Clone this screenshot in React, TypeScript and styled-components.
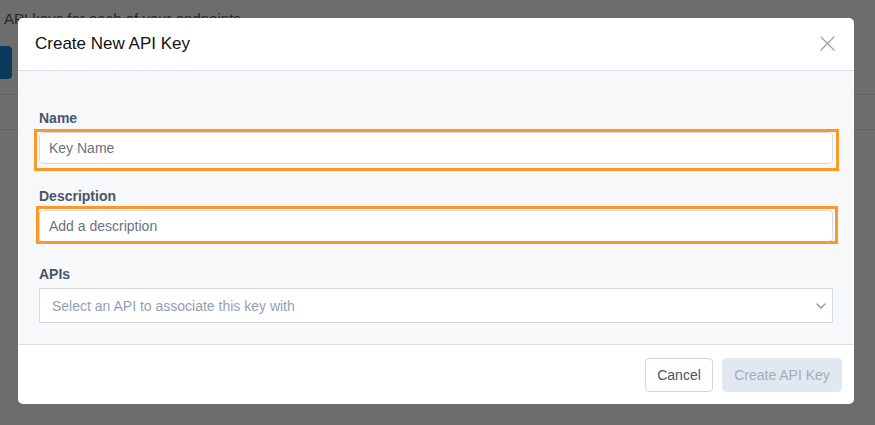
import React from "react";
import styled, { createGlobalStyle } from "styled-components";

const Global = createGlobalStyle`
  html, body { margin: 0; padding: 0; }
  body {
    width: 875px;
    height: 425px;
    overflow: hidden;
    background: #fbfbfd;
    font-family: "Liberation Sans", Arial, sans-serif;
  }
  * { box-sizing: border-box; }
`;

const Page = styled.div`
  position: relative;
  width: 875px;
  height: 425px;
  overflow: hidden;
`;

const PageHeader = styled.div`
  height: 95px;
  padding: 9px 0 0 4px;
  border-bottom: 1px solid #e6e6ea;
  display: flex;
  flex-direction: column;
  gap: 17px;
`;

const PageIntro = styled.p`
  margin: 0;
  font-size: 15px;
  line-height: 20px;
  color: #5a5a60;
`;

const PrimaryButton = styled.div`
  width: 120px;
  height: 33px;
  margin-left: -112px;
  background: #1a85d6;
  border-radius: 4px;
`;

const TabBar = styled.div`
  height: 35px;
  border-bottom: 1px solid #e6e6ea;
`;

const Overlay = styled.div`
  position: absolute;
  inset: 0;
  background: rgba(0, 0, 0, 0.565);
  padding: 18px 21px 21px 18px;
  display: flex;
  align-items: flex-start;
`;

const Modal = styled.div`
  width: 836px;
  height: 386px;
  background: #ffffff;
  border-radius: 5px;
  display: flex;
  flex-direction: column;
  overflow: hidden;
`;

const ModalHeader = styled.div`
  height: 53px;
  flex: none;
  display: flex;
  align-items: center;
  justify-content: space-between;
  padding: 0 19px 1px 17px;
  border-bottom: 1px solid #d9dee7;
`;

const Title = styled.h2`
  margin: 0;
  font-family: "Liberation Sans", Arial, sans-serif;
  font-weight: 400;
  font-size: 17px;
  line-height: 22px;
  color: #111111;
`;

const CloseButton = styled.button`
  border: 0;
  padding: 0;
  background: transparent;
  width: 16px;
  height: 16px;
  display: flex;
  align-items: center;
  justify-content: center;
  cursor: pointer;
`;

const ModalBody = styled.div`
  flex: 1;
  background: #f7f8fa;
  padding: 37px 21px 0 21px;
  display: flex;
  flex-direction: column;
  gap: 22px;
`;

const Field = styled.div`
  display: flex;
  flex-direction: column;
  gap: 4px;
`;

const Label = styled.label`
  font-size: 14px;
  line-height: 20px;
  font-weight: 700;
  color: #4a5568;
`;

const Highlight = styled.div<{ $t: number; $l: number; $r: number; $b: number }>`
  position: relative;
  &::after {
    content: "";
    position: absolute;
    top: ${(p) => -p.$t}px;
    left: ${(p) => -p.$l}px;
    right: ${(p) => -p.$r}px;
    bottom: ${(p) => -p.$b}px;
    border: 3px solid #fb9826;
    pointer-events: none;
  }
`;

const TextInput = styled.input`
  display: block;
  width: 100%;
  height: 32px;
  padding: 0 9px;
  border: 1px solid #d5dbe4;
  border-radius: 4px;
  background: #ffffff;
  font-family: "Liberation Sans", Arial, sans-serif;
  font-size: 14px;
  color: #2d3748;
  outline: none;
  &::placeholder {
    color: #6b7280;
  }
`;

const SelectBox = styled.div`
  position: relative;
  height: 35px;
  border: 1px solid #d5dbe4;
  background: #ffffff;
  display: flex;
  align-items: center;
  justify-content: space-between;
  padding: 0 6px 0 12px;
  font-size: 14px;
  color: #94a0b2;
`;

const ModalFooter = styled.div`
  height: 60px;
  flex: none;
  border-top: 1px solid #d9dee7;
  display: flex;
  align-items: center;
  justify-content: flex-end;
  gap: 9px;
  padding: 0 12px 0 0;
`;

const Button = styled.button<{ $variant?: "secondary" | "disabled"; $w: number }>`
  width: ${(p) => p.$w}px;
  height: 34px;
  padding: 0;
  border-radius: 4px;
  font-family: "Liberation Sans", Arial, sans-serif;
  font-size: 14px;
  border: 1px solid ${(p) => (p.$variant === "disabled" ? "#e2e8f0" : "#ced5df")};
  background: ${(p) => (p.$variant === "disabled" ? "#e2e8f0" : "#ffffff")};
  color: ${(p) => (p.$variant === "disabled" ? "#a0aec0" : "#4a5568")};
  cursor: ${(p) => (p.$variant === "disabled" ? "default" : "pointer")};
`;

export default function App() {
  return (
    <Page>
      <Global />
      <PageHeader>
        <PageIntro>API keys for each of your endpoints</PageIntro>
        <PrimaryButton />
      </PageHeader>
      <TabBar />
      <Overlay>
        <Modal>
          <ModalHeader>
            <Title>Create New API Key</Title>
            <CloseButton aria-label="Close">
              <svg width="15" height="15" viewBox="0 0 15 15" fill="none">
                <path d="M1 1L14 14M14 1L1 14" stroke="#9aa5b6" strokeWidth="1.4" strokeLinecap="round" />
              </svg>
            </CloseButton>
          </ModalHeader>
          <ModalBody>
            <Field>
              <Label>Name</Label>
              <Highlight $t={3} $l={5} $r={6} $b={7}>
                <TextInput placeholder="Key Name" />
              </Highlight>
            </Field>
            <Field>
              <Label>Description</Label>
              <Highlight $t={4} $l={3} $r={5} $b={2}>
                <TextInput placeholder="Add a description" />
              </Highlight>
            </Field>
            <Field>
              <Label>APIs</Label>
              <SelectBox>
                <span>Select an API to associate this key with</span>
                <svg width="10" height="6" viewBox="0 0 10 6" fill="none">
                  <path d="M1 1L5 5L9 1" stroke="#8a95a6" strokeWidth="1.4" strokeLinecap="round" strokeLinejoin="round" />
                </svg>
              </SelectBox>
            </Field>
          </ModalBody>
          <ModalFooter>
            <Button $variant="secondary" $w={68}>Cancel</Button>
            <Button $variant="disabled" $w={120} disabled>
              Create API Key
            </Button>
          </ModalFooter>
        </Modal>
      </Overlay>
    </Page>
  );
}
